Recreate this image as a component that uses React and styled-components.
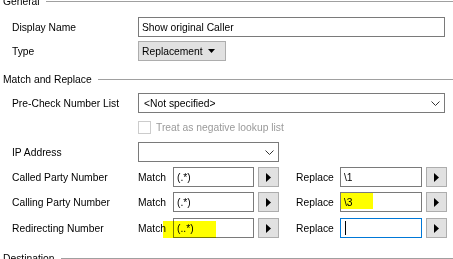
import styled, { createGlobalStyle } from "styled-components";

const GlobalStyle = createGlobalStyle`
  html, body { margin: 0; padding: 0; background: #fff; overflow: hidden; }
  body {
    font-family: "Liberation Sans", Arial, sans-serif;
    font-size: 10.3px;
    color: #000;
  }
`;

const Page = styled.div`
  position: relative;
  width: 453px;
  height: 259px;
  overflow: hidden;
  display: flex;
  flex-direction: column;
`;

const Heading = styled.div`
  display: flex;
  align-items: center;
  gap: 6px;
  height: 14px;
  flex: none;
  padding-left: 3px;
  margin-top: ${({ $mt }) => $mt}px;
  white-space: nowrap;
  &::after {
    content: "";
    flex: 1;
    height: 1px;
    background: #a0a0a0;
  }
`;

const Row = styled.div`
  display: flex;
  align-items: center;
  flex: none;
  height: ${({ $h }) => $h || 20}px;
  margin-top: ${({ $mt }) => $mt}px;
  padding: 0 8px 0 12px;
`;

const Label = styled.span`
  width: 126px;
  flex: none;
  white-space: nowrap;
`;

const SubLabel = styled.span`
  width: ${({ $w }) => $w}px;
  flex: none;
  white-space: nowrap;
`;

const TextBox = styled.div`
  position: relative;
  box-sizing: border-box;
  height: 20px;
  width: ${({ $w }) => ($w ? `${$w}px` : "auto")};
  flex: ${({ $w }) => ($w ? "none" : 1)};
  border: 1px solid ${({ $focus }) => ($focus ? "#0078d7" : "#7a7a7a")};
  background: #fff;
  padding-left: 3px;
  display: flex;
  align-items: center;
  white-space: nowrap;
`;

const Caret = styled.span`
  position: absolute;
  left: 4px;
  top: 2px;
  width: 1px;
  height: 14px;
  background: #000;
`;

const Combo = styled.div`
  box-sizing: border-box;
  height: 20px;
  width: ${({ $w }) => ($w ? `${$w}px` : "auto")};
  flex: ${({ $w }) => ($w ? "none" : 1)};
  border: 1px solid #7a7a7a;
  background: #fff;
  display: flex;
  align-items: center;
  justify-content: space-between;
  padding: 0 4px 0 5px;
  svg { flex: none; }
`;

const DropButton = styled.div`
  box-sizing: border-box;
  width: 88px;
  height: 20px;
  background: #e1e1e1;
  border: 1px solid #adadad;
  display: flex;
  align-items: center;
  justify-content: space-between;
  padding: 0 10px 0 3px;
`;

const ArrowBtn = styled.div`
  box-sizing: border-box;
  width: 21px;
  height: 20px;
  flex: none;
  margin-left: 4px;
  background: #e1e1e1;
  border: 1px solid #adadad;
  display: flex;
  align-items: center;
  justify-content: center;
`;

const Check = styled.span`
  box-sizing: border-box;
  width: 13px;
  height: 13px;
  margin-left: 126px;
  margin-right: 5px;
  border: 1px solid #cccccc;
  background: #fff;
  flex: none;
`;

const Disabled = styled.span`
  color: #9a9a9a;
  white-space: nowrap;
`;

const Marker = styled.span`
  position: absolute;
  background: #ffff00;
  mix-blend-mode: multiply;
  pointer-events: none;
`;

const Chevron = () => (
  <svg width="9" height="5" viewBox="0 0 9 5">
    <path d="M0.5 0.5 L4.5 4.5 L8.5 0.5" fill="none" stroke="#333" strokeWidth="1" />
  </svg>
);

const DownTri = () => (
  <svg width="7" height="4" viewBox="0 0 7 4">
    <path d="M0 0 H7 L3.5 4 Z" fill="#000" />
  </svg>
);

const RightTri = () => (
  <svg width="5" height="9" viewBox="0 0 5 9">
    <path d="M0 0 L5 4.5 L0 9 Z" fill="#000" />
  </svg>
);

const rules = [
  { label: "Called Party Number", match: "(.*)", replace: "\\1", mt: 5 },
  { label: "Calling Party Number", match: "(.*)", replace: "\\3", mt: 5 },
  { label: "Redirecting Number", match: "(..*)", replace: "", mt: 6, focus: true },
];

export default function App() {
  return (
    <Page>
      <GlobalStyle />
      <Heading $mt={-6}>General</Heading>
      <Row $mt={9}>
        <Label>Display Name</Label>
        <TextBox>Show original Caller</TextBox>
      </Row>
      <Row $mt={4}>
        <Label>Type</Label>
        <DropButton>
          Replacement
          <DownTri />
        </DropButton>
      </Row>

      <Heading $mt={11}>Match and Replace</Heading>
      <Row $mt={7}>
        <Label>Pre-Check Number List</Label>
        <Combo>
          &lt;Not specified&gt;
          <Chevron />
        </Combo>
      </Row>
      <Row $mt={8} $h={13}>
        <Check />
        <Disabled>Treat as negative lookup list</Disabled>
      </Row>
      <Row $mt={8}>
        <Label>IP Address</Label>
        <Combo $w={141}>
          <span />
          <Chevron />
        </Combo>
      </Row>
      {rules.map((r) => (
        <Row key={r.label} $mt={r.mt}>
          <Label>{r.label}</Label>
          <SubLabel $w={35}>Match</SubLabel>
          <TextBox $w={81}>{r.match}</TextBox>
          <ArrowBtn>
            <RightTri />
          </ArrowBtn>
          <SubLabel $w={44} style={{ marginLeft: 17 }}>Replace</SubLabel>
          <TextBox $w={82} $focus={r.focus}>
            {r.replace}
            {r.focus && <Caret />}
          </TextBox>
          <ArrowBtn>
            <RightTri />
          </ArrowBtn>
        </Row>
      ))}

      <Heading $mt={13}>Destination</Heading>

      <Marker style={{ left: 341, top: 193, width: 32, height: 16 }} />
      <Marker style={{ left: 163, top: 221, width: 53, height: 17 }} />
    </Page>
  );
}
